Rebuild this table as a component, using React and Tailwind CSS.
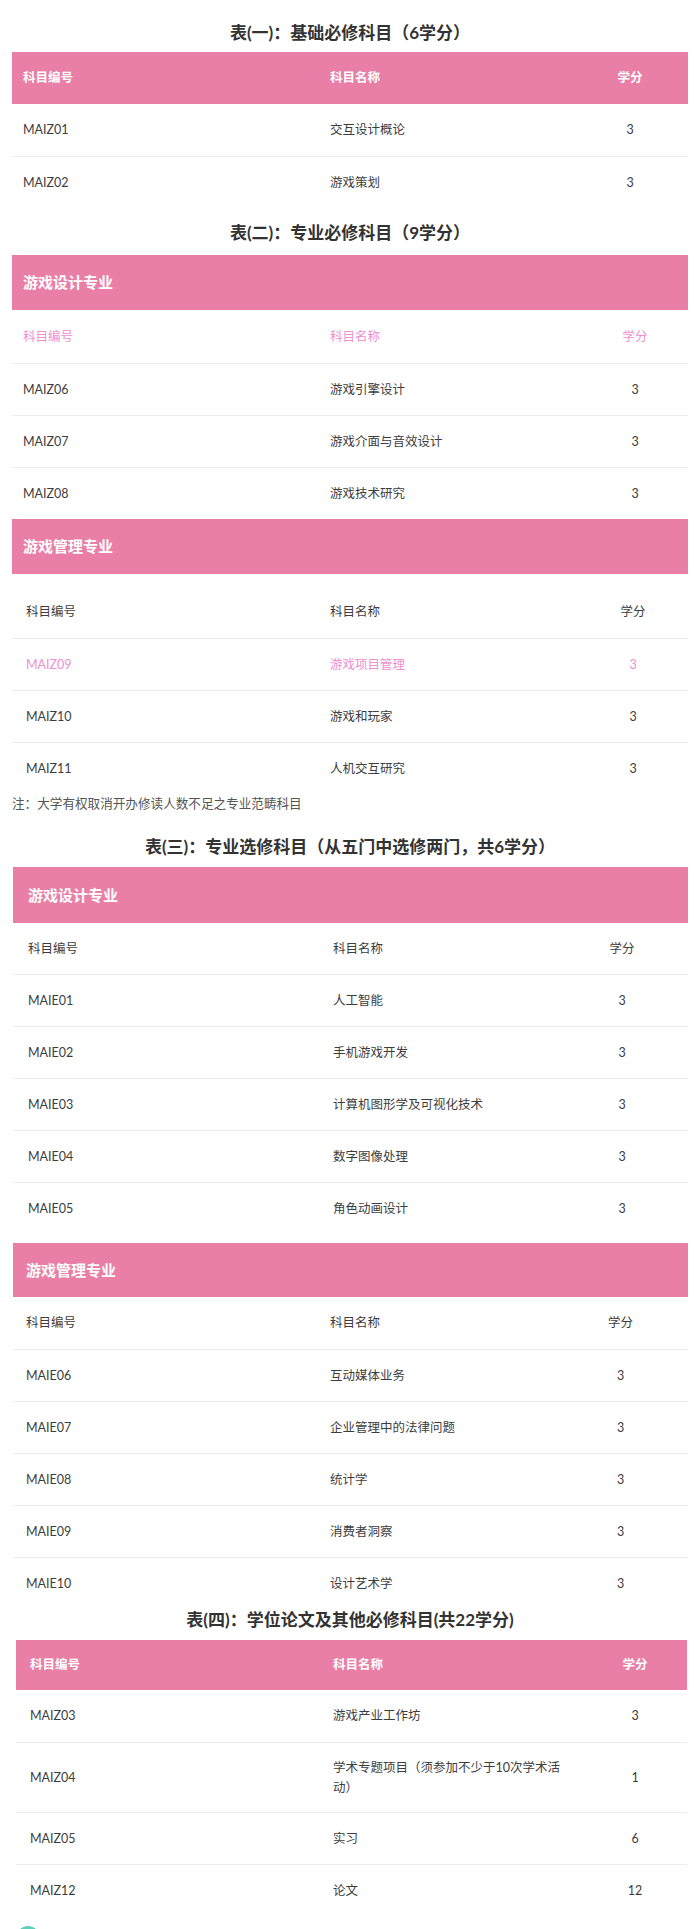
const FONT = "font-['Lato','Noto_Sans_CJK_SC',sans-serif]";

// grid templates per table section (col1 incl. left pad, col2, col3 centered)
const T1 = 'grid-cols-[318px_242px_1fr]';
const T2A = 'grid-cols-[318px_252px_1fr]';
const T2B = 'grid-cols-[318px_248px_1fr]';
const T3A = 'grid-cols-[320px_223px_1fr]';
const T3B = 'grid-cols-[317px_223px_1fr]';
const T4 = 'grid-cols-[317px_250px_1fr]';

const DARK = 'text-[#3d3d3d]';
const SOFT = 'text-[#f08fd0]';

function Title({ children, className = '' }) {
  return (
    <h2 className={`text-center text-[17px] leading-[22px] font-bold text-[#333] ${className}`}>
      {children}
    </h2>
  );
}

function Row({ cols, pad, cells, tone = DARK, line = true, h = 'h-[52px]', c2 = '' }) {
  return (
    <div className={`grid ${cols} items-center ${h} ${line ? 'border-t border-[#ececec]' : ''} ${tone} text-[12.5px] leading-[20px]`}>
      <div className={pad}>{cells[0]}</div>
      <div className={c2}>{cells[1]}</div>
      <div className="text-center">{cells[2]}</div>
    </div>
  );
}

function HeadRow({ cols, pad, h = 'h-[52px]' }) {
  return (
    <div className={`grid ${cols} items-center ${h} bg-[#e97fa6] text-white font-bold text-[12.5px]`}>
      <div className={pad}>科目编号</div>
      <div>科目名称</div>
      <div className="text-center">学分</div>
    </div>
  );
}

function Band({ children, pad, h = 'h-[55px]' }) {
  return (
    <div className={`flex items-center ${h} ${pad} bg-[#e97fa6] text-white font-bold text-[15px]`}>
      {children}
    </div>
  );
}

export default function App() {
  return (
    <div className={`w-full bg-white ${FONT}`}>
      <Title className="pt-[22px] mb-[8px]">表(一)：基础必修科目（6学分）</Title>
      <div className="mx-[12px]">
        <HeadRow cols={T1} pad="pl-[11px]" />
        <Row cols={T1} pad="pl-[11px]" line={false} cells={['MAIZ01', '交互设计概论', '3']} />
        <Row cols={T1} pad="pl-[11px]" cells={['MAIZ02', '游戏策划', '3']} />
      </div>

      <Title className="mt-[14px] mb-[11px]">表(二)：专业必修科目（9学分）</Title>
      <div className="mx-[12px]">
        <Band pad="pl-[11px]">游戏设计专业</Band>
        <Row cols={T2A} pad="pl-[11px]" line={false} h="h-[53px]" tone={SOFT} cells={['科目编号', '科目名称', '学分']} />
        <Row cols={T2A} pad="pl-[11px]" cells={['MAIZ06', '游戏引擎设计', '3']} />
        <Row cols={T2A} pad="pl-[11px]" cells={['MAIZ07', '游戏介面与音效设计', '3']} />
        <Row cols={T2A} pad="pl-[11px]" cells={['MAIZ08', '游戏技术研究', '3']} />
        <Band pad="pl-[11px]">游戏管理专业</Band>
        <div className="mt-[11px]">
          <Row cols={T2B} pad="pl-[14px]" line={false} h="h-[53px]" cells={['科目编号', '科目名称', '学分']} />
          <Row cols={T2B} pad="pl-[14px]" tone={SOFT} cells={['MAIZ09', '游戏项目管理', '3']} />
          <Row cols={T2B} pad="pl-[14px]" cells={['MAIZ10', '游戏和玩家', '3']} />
          <Row cols={T2B} pad="pl-[14px]" cells={['MAIZ11', '人机交互研究', '3']} />
        </div>
      </div>
      <p className="pl-[12px] text-[12.6px] leading-[20px] text-[#555]">注：大学有权取消开办修读人数不足之专业范畴科目</p>

      <Title className="mt-[22px] mb-[9px]">表(三)：专业选修科目（从五门中选修两门，共6学分）</Title>
      <div className="ml-[13px] mr-[12px]">
        <Band pad="pl-[15px]" h="h-[56px]">游戏设计专业</Band>
        <Row cols={T3A} pad="pl-[15px]" line={false} h="h-[51px]" cells={['科目编号', '科目名称', '学分']} />
        <Row cols={T3A} pad="pl-[15px]" cells={['MAIE01', '人工智能', '3']} />
        <Row cols={T3A} pad="pl-[15px]" cells={['MAIE02', '手机游戏开发', '3']} />
        <Row cols={T3A} pad="pl-[15px]" cells={['MAIE03', '计算机图形学及可视化技术', '3']} />
        <Row cols={T3A} pad="pl-[15px]" cells={['MAIE04', '数字图像处理', '3']} />
        <Row cols={T3A} pad="pl-[15px]" cells={['MAIE05', '角色动画设计', '3']} />
        <div className="mt-[9px]">
          <Band pad="pl-[13px]" h="h-[54px]">游戏管理专业</Band>
          <Row cols={T3B} pad="pl-[13px]" line={false} cells={['科目编号', '科目名称', '学分']} />
          <Row cols={T3B} pad="pl-[13px]" cells={['MAIE06', '互动媒体业务', '3']} />
          <Row cols={T3B} pad="pl-[13px]" cells={['MAIE07', '企业管理中的法律问题', '3']} />
          <Row cols={T3B} pad="pl-[13px]" cells={['MAIE08', '统计学', '3']} />
          <Row cols={T3B} pad="pl-[13px]" cells={['MAIE09', '消费者洞察', '3']} />
          <Row cols={T3B} pad="pl-[13px]" cells={['MAIE10', '设计艺术学', '3']} />
        </div>
      </div>

      <Title className="mb-[9px]">表(四)：学位论文及其他必修科目(共22学分)</Title>
      <div className="ml-[16px] mr-[13px]">
        <HeadRow cols={T4} pad="pl-[14px]" h="h-[50px]" />
        <Row cols={T4} pad="pl-[14px]" line={false} cells={['MAIZ03', '游戏产业工作坊', '3']} />
        <Row cols={T4} pad="pl-[14px]" h="h-[70px]" c2="pr-[15px]" cells={['MAIZ04', '学术专题项目（须参加不少于10次学术活动）', '1']} />
        <Row cols={T4} pad="pl-[14px]" cells={['MAIZ05', '实习', '6']} />
        <Row cols={T4} pad="pl-[14px]" cells={['MAIZ12', '论文', '12']} />
      </div>
      <div className="pl-[16px] pt-[10px] pb-[20px]">
        <div className="w-[24px] h-[24px] rounded-full bg-[#5cd0b8]" />
      </div>
    </div>
  );
}
